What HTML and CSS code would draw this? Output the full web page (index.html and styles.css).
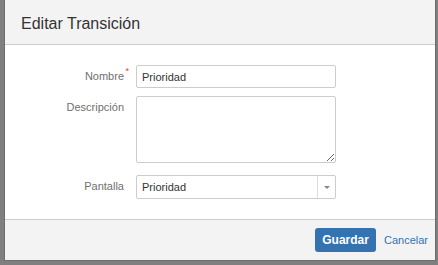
FILE: index.html
```html
<!DOCTYPE html>
<html lang="es">
<head>
    <meta charset="UTF-8">
    <title>Editar Transición</title>
    <link rel="stylesheet" href="styles.css">
</head>
<body>
    <div class="dialog">
        <header class="dialog-header">
            <h2>Editar Transición</h2>
        </header>

        <form class="dialog-body">
            <div class="field-group">
                <label for="nombre">Nombre<span class="required">*</span></label>
                <input id="nombre" class="text" type="text" value="Prioridad">
            </div>
            <div class="field-group field-tall">
                <label for="descripcion">Descripción</label>
                <textarea id="descripcion" class="textarea"></textarea>
            </div>
            <div class="field-group">
                <label>Pantalla</label>
                <div class="select">
                    <span class="select-value">Prioridad</span>
                    <span class="select-arrow"></span>
                </div>
            </div>
        </form>

        <footer class="dialog-footer">
            <button type="button" class="btn btn-primary">Guardar</button>
            <a href="#" class="cancel">Cancelar</a>
        </footer>
    </div>
</body>
</html>
```

FILE: styles.css
```css
* {
    margin: 0;
    padding: 0;
    box-sizing: border-box;
}

body {
    background: #7f7f7f;
    font-family: "Liberation Sans", Arial, sans-serif;
    font-size: 11px;
    color: #333;
    height: 265px;
    overflow: hidden;
}

.dialog {
    margin: 0 2px 0 4px;
    width: 432px;
    background: #fff;
    border-left: 1px solid #6d6d6d;
    border-right: 1px solid #6d6d6d;
    border-bottom: 1px solid #6d6d6d;
}

.dialog-header {
    height: 45px;
    background: #f3f3f3;
    border-bottom: 1px solid #cccccc;
    padding: 14px 0 0 16px;
}

.dialog-header h2 {
    font-size: 16px;
    font-weight: normal;
    color: #333;
    line-height: 20px;
}

.dialog-body {
    height: 174px;
    padding: 20px 0 0 0;
}

.field-group {
    display: grid;
    grid-template-columns: 119px 200px;
    column-gap: 12px;
    margin-bottom: 8px;
}

.field-tall {
    margin-bottom: 12px;
}

.field-group label {
    position: relative;
    text-align: right;
    color: #707070;
    line-height: 23px;
}

.required {
    position: absolute;
    right: -5px;
    top: -5px;
    color: #d04437;
    font-size: 9px;
}

.text,
.textarea,
.select {
    width: 200px;
    border: 1px solid #cccccc;
    border-radius: 2px;
    font-family: "Liberation Sans", Arial, sans-serif;
    font-size: 11px;
    color: #333;
    background: #fff;
}

.text {
    height: 23px;
    padding: 0 5px;
}

.textarea {
    height: 67px;
    padding: 4px 5px;
    display: block;
}

.select {
    height: 24px;
    display: flex;
    align-items: stretch;
}

.select-value {
    flex: 1;
    line-height: 22px;
    padding-left: 5px;
}

.select-arrow {
    width: 18px;
    border-left: 1px solid #dddddd;
    display: flex;
    align-items: center;
    justify-content: center;
}

.select-arrow::after {
    content: "";
    border-left: 3px solid transparent;
    border-right: 3px solid transparent;
    border-top: 3px solid #888;
}

.dialog-footer {
    height: 41px;
    background: #f3f3f3;
    border-top: 1px solid #cccccc;
    display: flex;
    justify-content: flex-end;
    align-items: center;
    gap: 8px;
    padding: 0 7px 1px 0;
}

.btn {
    height: 24px;
    padding: 0 7px;
    border: none;
    border-radius: 3px;
    font-family: "Liberation Sans", Arial, sans-serif;
    font-size: 12px;
    font-weight: bold;
    cursor: pointer;
}

.btn-primary {
    background: #3572b0;
    color: #fff;
}

.cancel {
    color: #3572b0;
    text-decoration: none;
    font-size: 11px;
}
```
